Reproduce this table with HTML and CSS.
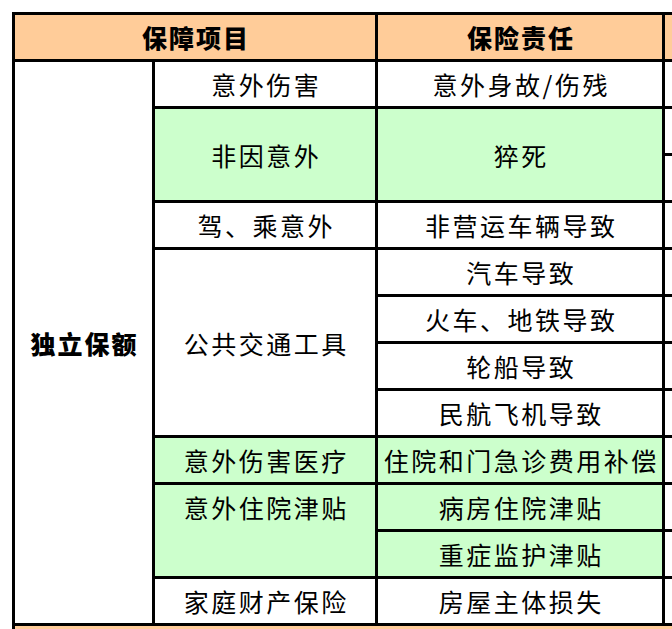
FILE: index.html
```html
<!DOCTYPE html>
<html lang="zh-CN">
<head>
<meta charset="utf-8">
<title>保障项目</title>
<link rel="stylesheet" href="styles.css">
</head>
<body>
<div class="sheet">
  <div class="cell head span-12">保障项目</div>
  <div class="cell head c3">保险责任</div>
  <div class="cell head c4"></div>

  <div class="cell bold c1 r-all">独立保额</div>

  <div class="cell c2 r2">意外伤害</div>
  <div class="cell c3 r2">意外身故/伤残</div>
  <div class="cell c4 r2"></div>

  <div class="cell green c2 r3-4">非因意外</div>
  <div class="cell green c3 r3-4">猝死</div>
  <div class="cell c4 r3"></div>
  <div class="cell c4 r4"></div>

  <div class="cell c2 r5">驾、乘意外</div>
  <div class="cell c3 r5">非营运车辆导致</div>
  <div class="cell c4 r5"></div>

  <div class="cell c2 r6-9">公共交通工具</div>
  <div class="cell c3 r6">汽车导致</div>
  <div class="cell c4 r6"></div>
  <div class="cell c3 r7">火车、地铁导致</div>
  <div class="cell c4 r7"></div>
  <div class="cell c3 r8">轮船导致</div>
  <div class="cell c4 r8"></div>
  <div class="cell c3 r9">民航飞机导致</div>
  <div class="cell c4 r9"></div>

  <div class="cell green c2 r10">意外伤害医疗</div>
  <div class="cell green c3 r10">住院和门急诊费用补偿</div>
  <div class="cell c4 r10"></div>

  <div class="cell green top c2 r11-12">意外住院津贴</div>
  <div class="cell green c3 r11">病房住院津贴</div>
  <div class="cell c4 r11"></div>
  <div class="cell green c3 r12">重症监护津贴</div>
  <div class="cell c4 r12"></div>

  <div class="cell c2 r13">家庭财产保险</div>
  <div class="cell c3 r13">房屋主体损失</div>
  <div class="cell c4 r13"></div>

  <div class="cell head full r14"></div>
</div>
</body>
</html>
```

FILE: styles.css
```css
html, body {
  margin: 0;
  padding: 0;
  background: #ffffff;
  overflow: hidden;
}

body {
  font-family: "Noto Sans CJK SC", "Noto Sans", sans-serif;
  color: #000000;
}

.sheet {
  display: grid;
  grid-template-columns: 137px 220px 284px 7px;
  grid-template-rows: repeat(13, 44px) 3px;
  gap: 3px;
  padding: 3px 0 0 3px;
  background: #000000;
  margin: 12px 0 0 12px;
  width: max-content;
}

.cell {
  background: #ffffff;
  display: flex;
  align-items: center;
  justify-content: center;
  font-size: 25px;
  line-height: 44px;
  letter-spacing: 2.5px;
  text-indent: 2.5px;
  white-space: nowrap;
  overflow: hidden;
}

.head {
  background: #ffcc99;
  font-weight: 900;
  letter-spacing: 2px;
  text-indent: 2px;
}

.bold {
  font-weight: 900;
  letter-spacing: 2px;
  text-indent: 2px;
}

.green {
  background: #ccffcc;
}

.top {
  align-items: flex-start;
}

.span-12 { grid-column: 1 / 3; grid-row: 1; }
.c1 { grid-column: 1; }
.c2 { grid-column: 2; }
.c3 { grid-column: 3; }
.c4 { grid-column: 4; }
.full { grid-column: 1 / -1; }

.head.c3, .head.c4 { grid-row: 1; }

.r-all { grid-row: 2 / 14; }
.r2 { grid-row: 2; }
.r3 { grid-row: 3; }
.r4 { grid-row: 4; }
.r3-4 { grid-row: 3 / 5; }
.r5 { grid-row: 5; }
.r6 { grid-row: 6; }
.r7 { grid-row: 7; }
.r8 { grid-row: 8; }
.r9 { grid-row: 9; }
.r6-9 { grid-row: 6 / 10; }
.r10 { grid-row: 10; }
.r11 { grid-row: 11; }
.r12 { grid-row: 12; }
.r11-12 { grid-row: 11 / 13; }
.r13 { grid-row: 13; }
.r14 { grid-row: 14; }
```
